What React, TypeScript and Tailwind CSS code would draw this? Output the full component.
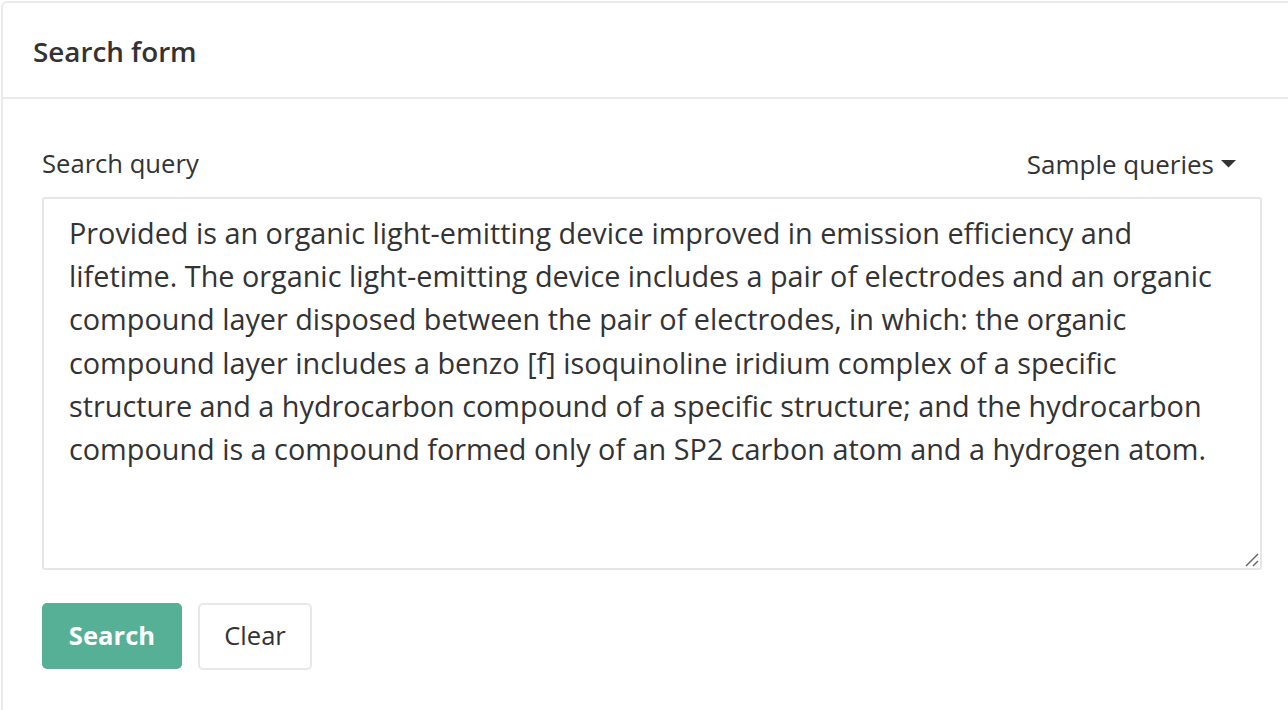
import React from "react";

const text =
  "Provided is an organic light-emitting device improved in emission efficiency and lifetime. The organic light-emitting device includes a pair of electrodes and an organic compound layer disposed between the pair of electrodes, in which: the organic compound layer includes a benzo [f] isoquinoline iridium complex of a specific structure and a hydrocarbon compound of a specific structure; and the hydrocarbon compound is a compound formed only of an SP2 carbon atom and a hydrogen atom.";

export default function App() {
  return (
    <div
      className="w-[1288px] h-[710px] overflow-hidden bg-white text-[#333]"
      style={{ fontFamily: '"Open Sans", sans-serif' }}
    >
      <div className="ml-px mt-px w-[1310px] h-[760px] border-2 border-[#ebebeb] rounded-[6px] bg-white">
        <div className="h-[96px] border-b-2 border-[#ebebeb] flex items-center pl-[30px] pt-[3px]">
          <h2 className="text-[27.8px] font-semibold leading-none">Search form</h2>
        </div>
        <div className="pl-[39px] w-[1259px] pt-[47px]">
          <div className="flex items-center justify-between h-[36px] mb-[15px]">
            <span className="text-[25.6px]">Search query</span>
            <button className="flex items-center gap-[7px] text-[26px] pr-[26px]">
              <span>Sample queries</span>
              <svg width="15" height="8" viewBox="0 0 15 8">
                <path d="M0 0 L15 0 L7.5 7.5 Z" fill="#333" />
              </svg>
            </button>
          </div>
          <div className="relative w-[1220px] h-[373px]">
            <textarea
              defaultValue={text}
              className="block w-[1220px] h-[373px] border-2 border-[#e6e6e6] rounded-[3px] px-[25px] py-[12px] text-[28.8px] leading-[43.2px] text-[#333] outline-none resize-none"
              style={{ fontFamily: '"Open Sans", sans-serif' }}
            />
            <svg
              className="absolute right-[3px] bottom-[3px] pointer-events-none"
              width="16"
              height="16"
              viewBox="0 0 16 16"
            >
              <path d="M3 15 L15 3" stroke="#666" strokeWidth="1.4" />
              <path d="M10 15 L15 10" stroke="#666" strokeWidth="1.4" />
            </svg>
          </div>
          <div className="flex gap-[16px] mt-[33px]">
            <button className="w-[140px] h-[66px] rounded-[5px] bg-[#56b096] text-white font-bold text-[25.6px]">
              Search
            </button>
            <button className="w-[114px] h-[67px] rounded-[5px] border-2 border-[#e8e8ea] bg-white text-[25.6px] text-[#333]">
              Clear
            </button>
          </div>
        </div>
      </div>
    </div>
  );
}
